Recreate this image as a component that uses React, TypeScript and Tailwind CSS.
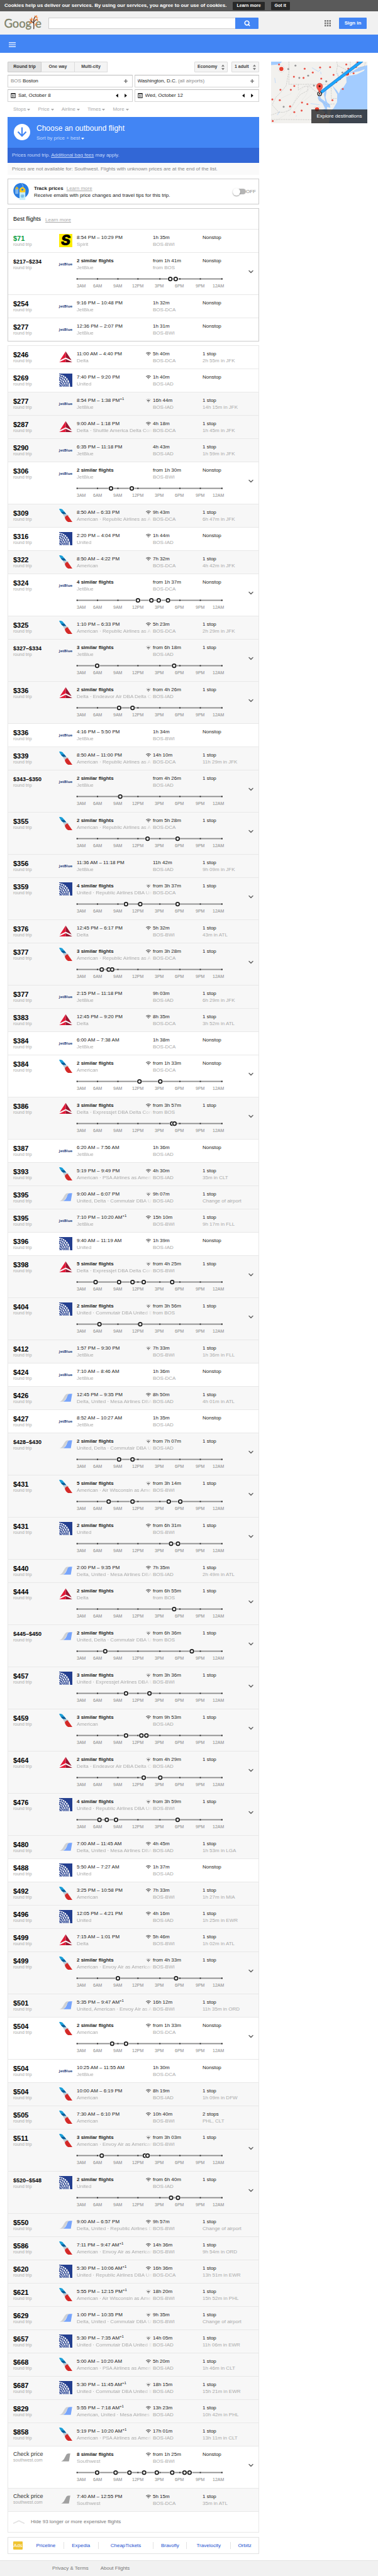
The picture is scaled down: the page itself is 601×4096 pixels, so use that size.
import React from "react";
import { ChevronDown, Search } from "lucide-react";

type Airline = "spirit" | "jetblue" | "delta" | "united" | "american" | "mixed" | "southwest";
type Wifi = "none" | "full" | "some";

interface Flight {
  price: string;
  airline: Airline;
  title: string;
  nextDay?: boolean;
  carrier: string;
  wifi: Wifi;
  duration: string;
  route: string;
  stops: string;
  layover?: string;
  departures?: number[];
}

const WIFI: Wifi[] = ["none", "full", "some"];
const J = "JetBlue";
const AA = "American";
const UA = "United";
const DL = "Delta";
const AA_REPUBLIC = "American · Republic Airlines as A";
const AA_ENVOY = "American · Envoy Air as American";
const AA_PSA = "American · PSA Airlines as Ameri";
const AA_WISCONSIN = "American · Air Wisconsin as Ame";
const DL_ENDEAVOR = "Delta · Endeavor Air DBA Delta Co";
const DL_EXPRESSJET = "Delta · Expressjet DBA Delta Con";
const UA_REPUBLIC = "United · Republic Airlines DBA Un";
const UA_COMMUTAIR = "United · Commutair DBA United E";
const UD_COMMUTAIR = "United, Delta · Commutair DBA U";
const DU_MESA = "Delta, United · Mesa Airlines DBA";

function one(
  price: string,
  airline: Airline,
  time: string,
  carrier: string,
  wifi: number,
  duration: string,
  route: string,
  layover?: string,
  stops?: string,
): Flight {
  return {
    price,
    airline,
    title: time.replace("+1", ""),
    nextDay: time.endsWith("+1"),
    carrier,
    wifi: WIFI[wifi],
    duration,
    route,
    stops: stops ?? (layover ? "1 stop" : "Nonstop"),
    layover,
  };
}

function group(
  price: string,
  airline: Airline,
  count: number,
  carrier: string,
  wifi: number,
  duration: string,
  route: string,
  stops: string,
  departures: number[],
): Flight {
  return {
    price,
    airline,
    title: `${count} similar flights`,
    carrier,
    wifi: WIFI[wifi],
    duration: `from ${duration}`,
    route,
    stops,
    departures,
  };
}

const BEST: Flight[] = [
  one("$71", "spirit", "8:54 PM – 10:29 PM", "Spirit", 0, "1h 35m", "BOS-BWI"),
  group("$217–$234", "jetblue", 2, J, 0, "1h 41m", "from BOS", "Nonstop", [243, 257]),
  one("$254", "jetblue", "9:16 PM – 10:48 PM", J, 0, "1h 32m", "BOS-DCA"),
  one("$277", "jetblue", "12:36 PM – 2:07 PM", J, 0, "1h 31m", "BOS-BWI"),
];

const REST: Flight[] = [
  one("$246", "delta", "11:00 AM – 4:40 PM", DL, 1, "5h 40m", "BOS-DCA", "2h 55m in JFK"),
  one("$269", "united", "7:40 PM – 9:20 PM", UA, 1, "1h 40m", "BOS-IAD"),
  one("$277", "jetblue", "8:54 PM – 1:38 PM+1", J, 2, "16h 44m", "BOS-IAD", "14h 15m in JFK"),
  one("$287", "delta", "9:00 AM – 1:18 PM", "Delta · Shuttle America Delta Con", 1, "4h 18m", "BOS-DCA", "1h 45m in JFK"),
  one("$290", "jetblue", "6:35 PM – 11:18 PM", J, 0, "4h 43m", "BOS-IAD", "1h 59m in JFK"),
  group("$306", "jetblue", 2, J, 0, "1h 30m", "BOS-BWI", "Nonstop", [89, 143]),
  one("$309", "american", "8:50 AM – 6:33 PM", AA_REPUBLIC, 1, "9h 43m", "BOS-DCA", "6h 47m in JFK"),
  one("$316", "united", "2:20 PM – 4:04 PM", UA, 1, "1h 44m", "BOS-IAD"),
  one("$322", "american", "8:50 AM – 4:22 PM", AA, 1, "7h 32m", "BOS-DCA", "4h 42m in JFK"),
  group("$324", "jetblue", 4, J, 0, "1h 37m", "BOS-DCA", "Nonstop", [159, 194, 213, 237]),
  one("$325", "american", "1:10 PM – 6:33 PM", AA_REPUBLIC, 1, "5h 23m", "BOS-DCA", "2h 29m in JFK"),
  group("$327–$334", "jetblue", 3, J, 2, "6h 18m", "BOS-IAD", "1 stop", [53, 253]),
  group("$336", "delta", 2, DL_ENDEAVOR, 2, "4h 26m", "BOS-IAD", "1 stop", [110, 145]),
  one("$336", "jetblue", "4:16 PM – 5:50 PM", J, 0, "1h 34m", "BOS-BWI"),
  one("$339", "american", "8:50 AM – 11:00 PM", AA_REPUBLIC, 1, "14h 10m", "BOS-DCA", "11h 29m in JFK"),
  group("$343–$350", "jetblue", 2, J, 0, "4h 26m", "BOS-IAD", "1 stop", [113]),
  group("$355", "american", 2, AA_REPUBLIC, 1, "5h 28m", "BOS-DCA", "1 stop", [184, 262]),
  one("$356", "jetblue", "11:36 AM – 11:18 PM", J, 0, "11h 42m", "BOS-IAD", "9h 09m in JFK"),
  group("$359", "united", 4, UA_REPUBLIC, 2, "3h 37m", "BOS-DCA", "1 stop", [128, 165, 262]),
  one("$376", "delta", "12:45 PM – 6:17 PM", DL, 1, "5h 32m", "BOS-BWI", "43m in ATL"),
  group("$377", "american", 3, AA_REPUBLIC, 1, "3h 28m", "BOS-DCA", "1 stop", [65, 83, 92]),
  one("$377", "jetblue", "2:15 PM – 11:18 PM", J, 0, "9h 03m", "BOS-IAD", "6h 29m in JFK"),
  one("$383", "delta", "12:45 PM – 9:20 PM", DL, 1, "8h 35m", "BOS-DCA", "3h 52m in ATL"),
  one("$384", "jetblue", "6:00 AM – 7:38 AM", J, 0, "1h 38m", "BOS-DCA"),
  group("$384", "american", 2, AA, 1, "1h 33m", "BOS-DCA", "Nonstop", [163, 217]),
  group("$386", "delta", 3, DL_EXPRESSJET, 1, "3h 57m", "from BOS", "1 stop", [248, 254]),
  one("$387", "jetblue", "6:20 AM – 7:56 AM", J, 0, "1h 36m", "BOS-IAD"),
  one("$393", "american", "5:19 PM – 9:49 PM", AA_PSA, 1, "4h 30m", "BOS-IAD", "35m in CLT"),
  one("$395", "mixed", "9:00 AM – 6:07 PM", UD_COMMUTAIR, 2, "9h 07m", "BOS-IAD", "Change of airport"),
  one("$395", "jetblue", "7:10 PM – 10:20 AM+1", J, 1, "15h 10m", "BOS-BWI", "9h 17m in FLL"),
  one("$396", "united", "9:40 AM – 11:19 AM", UA, 1, "1h 39m", "BOS-IAD"),
  group("$398", "delta", 5, DL_EXPRESSJET, 2, "4h 25m", "BOS-BWI", "1 stop", [49, 110, 145, 174, 248]),
  group("$404", "united", 2, UA_COMMUTAIR, 2, "3h 56m", "from BOS", "1 stop", [59, 165]),
  one("$412", "jetblue", "1:57 PM – 9:30 PM", J, 2, "7h 33m", "BOS-BWI", "1h 36m in FLL"),
  one("$424", "jetblue", "7:10 AM – 8:46 AM", J, 0, "1h 36m", "BOS-DCA"),
  one("$426", "mixed", "12:45 PM – 9:35 PM", DU_MESA, 1, "8h 50m", "BOS-IAD", "4h 01m in ATL"),
  one("$427", "jetblue", "8:52 AM – 10:27 AM", J, 0, "1h 35m", "BOS-IAD"),
  group("$428–$430", "mixed", 2, UD_COMMUTAIR, 2, "7h 07m", "BOS-IAD", "1 stop", [110, 145]),
  group("$431", "american", 5, AA_WISCONSIN, 2, "3h 14m", "BOS-BWI", "1 stop", [83, 145, 239, 269]),
  group("$431", "united", 2, UA, 1, "6h 31m", "BOS-BWI", "1 stop", [245, 263]),
  one("$440", "mixed", "2:00 PM – 9:35 PM", DU_MESA, 1, "7h 35m", "BOS-IAD", "2h 49m in ATL"),
  group("$444", "delta", 2, DL, 1, "6h 55m", "from BOS", "1 stop", [253]),
  group("$445–$450", "mixed", 2, UD_COMMUTAIR, 2, "6h 36m", "from BOS", "1 stop", [74, 299]),
  group("$457", "united", 3, "United · Expressjet Airlines DBA U", 2, "3h 36m", "BOS-BWI", "1 stop", [128, 189]),
  group("$459", "american", 3, AA, 1, "9h 53m", "BOS-IAD", "1 stop", [128, 168, 181]),
  group("$464", "delta", 2, DL_ENDEAVOR, 2, "4h 29m", "BOS-IAD", "1 stop", [174, 217]),
  group("$476", "united", 4, UA_REPUBLIC, 2, "3h 59m", "BOS-BWI", "1 stop", [59, 78, 102, 262]),
  one("$480", "mixed", "7:00 AM – 11:45 AM", DU_MESA, 1, "4h 45m", "BOS-IAD", "1h 53m in LGA"),
  one("$488", "united", "5:50 AM – 7:27 AM", UA, 1, "1h 37m", "BOS-IAD"),
  one("$492", "american", "3:25 PM – 10:58 PM", AA, 1, "7h 33m", "BOS-BWI", "1h 27m in MIA"),
  one("$496", "united", "12:05 PM – 4:21 PM", UA, 1, "4h 16m", "BOS-IAD", "1h 25m in EWR"),
  one("$499", "delta", "7:15 AM – 1:01 PM", DL, 1, "5h 46m", "BOS-BWI", "1h 02m in ATL"),
  group("$499", "american", 2, AA_ENVOY, 2, "4h 33m", "BOS-BWI", "1 stop", [107, 258]),
  one("$501", "mixed", "5:35 PM – 9:47 AM+1", "United, American · Envoy Air as A", 1, "16h 12m", "BOS-BWI", "11h 35m in ORD"),
  group("$504", "american", 2, AA, 1, "1h 33m", "BOS-DCA", "Nonstop", [92, 128]),
  one("$504", "jetblue", "10:25 AM – 11:55 AM", J, 0, "1h 30m", "BOS-DCA"),
  one("$504", "american", "10:00 AM – 6:19 PM", AA, 1, "8h 19m", "BOS-IAD", "1h 09m in DFW"),
  one("$505", "american", "7:30 AM – 6:10 PM", AA, 1, "10h 40m", "BOS-BWI", "PHL, CLT", "2 stops"),
  group("$511", "american", 3, AA_ENVOY, 2, "3h 03m", "BOS-BWI", "1 stop", [65, 177, 184]),
  group("$520–$548", "united", 2, UA, 1, "6h 40m", "BOS-IAD", "1 stop", [245, 263]),
  one("$550", "mixed", "9:00 AM – 6:57 PM", "Delta, United · Republic Airlines D", 1, "9h 57m", "BOS-BWI", "Change of airport"),
  one("$586", "american", "7:11 PM – 9:47 AM+1", AA_ENVOY, 1, "14h 36m", "BOS-BWI", "9h 54m in ORD"),
  one("$620", "united", "5:30 PM – 10:06 AM+1", UA_REPUBLIC, 1, "16h 36m", "BOS-DCA", "13h 51m in EWR"),
  one("$621", "american", "5:55 PM – 12:15 PM+1", AA_WISCONSIN, 2, "18h 20m", "BOS-BWI", "15h 52m in PHL"),
  one("$629", "mixed", "1:00 PM – 10:35 PM", "Delta, United · Commutair DBA U", 2, "9h 35m", "BOS-BWI", "Change of airport"),
  one("$657", "united", "5:30 PM – 7:35 AM+1", UA_COMMUTAIR, 2, "14h 05m", "BOS-IAD", "11h 06m in EWR"),
  one("$668", "american", "5:00 AM – 10:20 AM", AA_PSA, 1, "5h 20m", "BOS-IAD", "1h 46m in CLT"),
  one("$687", "united", "5:30 PM – 11:45 AM+1", UA_COMMUTAIR, 2, "18h 15m", "BOS-IAD", "15h 21m in EWR"),
  one("$829", "mixed", "5:55 PM – 7:18 AM+1", "American, United · Mesa Airlines", 1, "13h 23m", "BOS-IAD", "10h 42m in PHL"),
  one("$858", "american", "5:19 PM – 10:20 AM+1", AA_PSA, 1, "17h 01m", "BOS-IAD", "13h 11m in CLT"),
  group("Check price", "southwest", 8, "Southwest", 1, "1h 25m", "BOS-BWI", "Nonstop", [53, 101, 137, 175, 208, 248, 280, 293]),
  one("Check price", "southwest", "7:40 AM – 12:55 PM", "Southwest", 1, "5h 15m", "BOS-DCA", "35m in ATL"),
];

function AirlineLogo({ airline }: { airline: Airline }) {
  const box = "block size-[21px]";
  switch (airline) {
    case "jetblue":
      return (
        <span className="flex h-[21px] w-[21px] items-center justify-center font-['Open_Sans',sans-serif] text-[6px] font-bold leading-[8px] text-[#24407c]">
          jetBlue
        </span>
      );
    case "spirit":
      return (
        <span className="flex size-[21px] items-center justify-center bg-[#ffec00] font-['Inter',sans-serif] text-[23px] font-black italic leading-none text-black">
          S
        </span>
      );
    case "delta":
      return (
        <svg viewBox="0 0 35 35" className={box} aria-hidden="true">
          <path d="M17.5 3 L2 26.5 L17.5 19 Z" fill="#e51937" />
          <path d="M17.5 3 L33 26.5 L17.5 19 Z" fill="#98152f" />
          <path d="M17.5 23 L0 31.5 H17.5 Z" fill="#e51937" />
          <path d="M17.5 23 L35 31.5 H17.5 Z" fill="#98152f" />
        </svg>
      );
    case "united":
      return (
        <svg viewBox="0 0 35 35" className={box} aria-hidden="true">
          <rect width="35" height="35" fill="#243f8f" />
          <path d="M0 2 C14 2 29 14 29 35 H0 Z" fill="#fff" />
          <g fill="none" stroke="#243f8f" strokeWidth="1.7">
            <path d="M0 6 C12 7 24 18 25 35" />
            <path d="M0 11 C9 13 19 22 20.5 35" />
            <path d="M0 17 C7 19 14 26 15.5 35" />
            <path d="M0 23 C5 25 10 30 11 35" />
            <path d="M0 29 C3 30 5 33 6 35" />
            <path d="M6 1 C2 10 1 16 0 20" />
            <path d="M11 3 C6 12 3 22 2 35" />
            <path d="M16 5 C11 13 7 24 6 35" />
            <path d="M21 9 C16 15 12 25 11 35" />
            <path d="M25 14 C20 19 17 27 16 35" />
            <path d="M28 21 C24 25 22 30 21 35" />
          </g>
        </svg>
      );
    case "american":
      return (
        <svg viewBox="0 0 35 35" className={box} aria-hidden="true">
          <path d="M0 0 C6 0 9 1 11 4 L19 14 H11 C7 13 3 7 0 0 Z" fill="#1b9fd8" />
          <path d="M5 8 L14 8 L19 14 H11 C9 13 7 11 5 8 Z" fill="#0c5d98" />
          <path d="M10 15 L19 14 C22 15 24 17 27 17.5 C21 18 17 20 15 23 C13 20 12 18 10 15 Z" fill="#c3ccd3" />
          <path d="M15 23 C18 18 21 17 23 18 L35 35 H24 C19 33 16 28 15 23 Z" fill="#d42a28" />
        </svg>
      );
    case "mixed":
      return (
        <svg viewBox="0 0 35 35" className={box} aria-hidden="true">
          <path d="M1 28 C8 26 11 19 15 12 Q18 7 22 7 H27 Q24 8 22 12 C18 19 16 26 9 28 Z" fill="#cfd1d4" />
          <path d="M10 28 C17 26 20 18 22 12 Q24 7 28 7 H35 Q34 8 34 10 L31 28 Z" fill="#77a4fb" />
        </svg>
      );
    case "southwest":
      return (
        <svg viewBox="0 0 35 35" className={box} aria-hidden="true">
          <path d="M5 28 C12 26 15 18 18 12 Q20 7 24 7 H30 Q29 8 29 10 L26 28 Z" fill="#a0a0a0" />
        </svg>
      );
  }
}

function WifiMark({ level }: { level: Wifi }) {
  if (level === "none") return null;
  return (
    <svg viewBox="0 0 13 11" className="h-[7px] w-[8px] shrink-0" fill="none" strokeLinecap="round" role="img" aria-label="Wi-Fi">
      <path d="M1 4 Q6.5 -0.5 12 4" stroke={level === "full" ? "#444" : "#c4c4c4"} strokeWidth="1.7" />
      <path d="M3.5 6.6 Q6.5 4 9.5 6.6" stroke="#444" strokeWidth="1.7" />
      <circle cx="6.5" cy="9" r="1.2" fill="#444" />
    </svg>
  );
}

const TICKS = [1, 54, 107, 159, 216, 268, 321, 377];

function Timeline({ departures, shaded }: { departures: number[]; shaded: boolean }) {
  const halo = shaded ? "#f7f7f7" : "#fff";
  return (
    <div className="w-[232px]">
      <svg viewBox="0 0 379 14" className="mt-[8px] block h-[9px] w-full overflow-visible" aria-hidden="true">
        <rect x="0" y="5.5" width="379" height="3" fill="#8c8c8c" />
        {TICKS.map((x) => (
          <rect key={x} x={x - 1.5} y="5.5" width="3" height="3" fill="#222" />
        ))}
        {departures.map((x) => (
          <g key={x}>
            <circle cx={x} cy="7.2" r="7" fill={halo} />
            <circle cx={x} cy="7.2" r="4.5" fill="#fff" stroke="#222" strokeWidth="3" />
          </g>
        ))}
      </svg>
      <div className="mt-[3px] grid grid-cols-[26px_32px_30px_36px_32px_33px_27px_auto] text-[7px] leading-[8px] text-[#888]">
        {["3AM", "6AM", "9AM", "12PM", "3PM", "6PM", "9PM", "12AM"].map((t) => (
          <span key={t}>{t}</span>
        ))}
      </div>
    </div>
  );
}

function FlightRow({ flight, shaded, cheapest }: { flight: Flight; shaded: boolean; cheapest: boolean }) {
  const unknown = flight.price === "Check price";
  const isRange = flight.price.includes("–");
  const isGroup = !!flight.departures;
  return (
    <li
      className={`flex items-start border-t border-[#e8e8e8] pl-[8px] ${shaded ? "bg-[#f7f7f7]" : "bg-white"} ${isGroup ? "h-[67px]" : "h-[37px]"}`}
    >
      <div className="w-[73px] shrink-0 pt-[8px]">
        {unknown ? (
          <a href="#southwest" className="-mt-[2px] block text-[9px] leading-[12px] text-[#333]">
            {flight.price}
          </a>
        ) : (
          <div
            className={`font-bold leading-[12px] ${isRange ? "text-[9px]" : "text-[11px]"} ${cheapest ? "text-[#0a9d41]" : "text-black"}`}
          >
            {flight.price}
          </div>
        )}
        <div className="text-[7px] leading-[8px] text-[#aaa]">{unknown ? "southwest.com" : "round trip"}</div>
      </div>
      <div className="w-[28px] shrink-0 pt-[7px]">
        <AirlineLogo airline={flight.airline} />
      </div>
      <div className="min-w-0 flex-1 pt-[7px]">
        <div className="grid grid-cols-[121px_79px_1fr] whitespace-nowrap text-[8px] leading-[11px]">
          <div className="min-w-0">
            <div className="flex items-center justify-between pr-[3px] text-[#222]">
              <span className={isGroup ? "font-bold" : ""}>
                {flight.title}
                {flight.nextDay && <sup className="text-[6px]">+1</sup>}
              </span>
              <WifiMark level={flight.wifi} />
            </div>
            <div className="overflow-hidden text-[#aaa] [mask-image:linear-gradient(to_right,#000_88%,transparent)]">
              {flight.carrier}
            </div>
          </div>
          <div>
            <div className="text-[#222]">{flight.duration}</div>
            <div className="text-[#aaa]">{flight.route}</div>
          </div>
          <div>
            <div className="text-[#222]">{flight.stops}</div>
            <div className="text-[#aaa]">{flight.layover}</div>
          </div>
        </div>
        {flight.departures && <Timeline departures={flight.departures} shaded={shaded} />}
      </div>
      <div className="w-[18px] shrink-0">
        {isGroup && (
          <button type="button" aria-label="Show similar flights" className="mt-[24px] block">
            <ChevronDown className="size-[12px] text-[#666]" strokeWidth={3} />
          </button>
        )}
      </div>
    </li>
  );
}

function GoogleDoodle() {
  return (
    <svg viewBox="0 0 96 40" className="block h-[25px] w-[59px]" role="img" aria-label="Google">
      <g fill="#7e8268" stroke="#7e8268" strokeWidth="0.5" fontFamily="Lato, sans-serif" fontSize="30">
        <text x="-1" y="32">Goog</text>
        <text x="80" y="32">e</text>
      </g>
      <g fill="none" stroke="#4a2a20" strokeWidth="2" strokeLinecap="round">
        <path d="M76 35 C77 26 75 18 76 10 L80 3" />
        <path d="M76 21 L68 13" />
        <path d="M76 17 L84 10" />
      </g>
      <g fill="#f08a45">
        <path d="M80 5 L77 0 L81 2 L84 -1 L84 4 L88 5 L83 7 Z" />
        <path d="M69 14 L64 10 L69 10 L70 5 L73 10 L72 15 Z" />
        <path d="M67 20 L63 17 L68 16 L72 18 L70 22 Z" />
        <path d="M82 11 L86 7 L86 11 L88 14 L84 15 Z" />
        <path d="M78 13 L75 9 L80 9 Z" />
        <path d="M79 23 L84 20 L83 25 L79 28 Z" />
      </g>
    </svg>
  );
}

function DestinationMap() {
  const red: [number, number][] = [
    [74, 35], [274, 68], [337, 98], [394, 59], [472, 56], [598, 35], [614, 68], [655, 104], [499, 116], [403, 146],
    [190, 131], [265, 140], [193, 203], [166, 233], [85, 233], [22, 308], [80, 314], [160, 362], [253, 332],
    [295, 344], [250, 395], [193, 407], [25, 476], [571, 227], [490, 314], [520, 173], [430, 425], [674, 55],
  ];
  const gray: [number, number][] = [
    [202, 44], [146, 71], [232, 140], [301, 122], [442, 167], [346, 200], [568, 98], [550, 149], [110, 365],
  ];
  const cities: [number, number][] = [[92, 70], [604, 106], [370, 385], [694, 14]];
  return (
    <svg viewBox="12 12 750 483" preserveAspectRatio="xMidYMid slice" className="block size-full" aria-hidden="true">
      <rect x="12" y="12" width="750" height="483" fill="#f2f1ee" />
      <path
        d="M762 42 L700 58 L620 104 L598 134 L600 175 L578 210 L555 225 L540 262 L524 238 L490 200 L500 220 L528 268 L526 330 L500 375 L476 400 L462 495 L762 495 Z"
        fill="#a3ccff"
      />
      <path d="M12 12 H100 L84 26 L60 36 L12 40 Z" fill="#a3ccff" />
      <path d="M598 132 L640 100 L700 88 L742 72 L735 86 L680 112 L620 124 Z" fill="#f2f1ee" />
      <path d="M436 205 L444 250 L436 290 L448 330 L470 348 L474 372 L448 366 L452 420 L440 440 L428 400 L402 392 L434 380 L412 336 L384 316 L376 290 L390 270 L400 300 L436 326 L424 270 Z" fill="#a3ccff" />
      <g fill="none" stroke="#a3ccff" strokeWidth="3">
        <path d="M330 60 L380 90 L402 70 M398 92 L402 112 M530 100 L540 160 M505 155 L500 185" />
        <path d="M40 140 L46 180 M60 430 L80 400 M205 440 L212 434 M320 340 L390 350 M350 380 L420 420" />
      </g>
      <g fill="none" stroke="#dcdcda" strokeWidth="2">
        <path d="M300 180 L240 240 L190 330 L120 430 L40 480 M320 200 L280 280 L200 380 L150 440 M90 300 L170 260 M270 320 L330 270" />
      </g>
      <g fill="none" stroke="#b3b3b1" strokeWidth="2.5" strokeDasharray="14 5">
        <path d="M151 12 V190 H476 L490 205 M480 196 L482 300 H524" />
        <path d="M224 190 V235 L262 210 L312 202 L345 235 L385 262 M300 205 L296 240 L240 270 L200 320 L160 390 L110 408 L72 408 L20 350 L50 290 L90 250 L130 200 L146 110" />
        <path d="M12 464 L120 464 L330 466 M72 408 L12 430 M376 300 L440 348 L510 342" />
        <path d="M524 12 L530 44 L596 76 L592 130 M530 44 L520 100 L540 130 L500 180 M630 12 V70 L740 52 L748 12" />
      </g>
      {gray.map(([x, y]) => (
        <circle key={`${x}-${y}`} cx={x} cy={y} r="7.5" fill="#979797" />
      ))}
      {red.map(([x, y]) => (
        <circle key={`${x}-${y}`} cx={x} cy={y} r="7.5" fill="#ea5348" />
      ))}
      {cities.map(([x, y]) => (
        <g key={`${x}-${y}`}>
          <circle cx={x} cy={y} r="25" fill="#bdbdbd" />
          <circle cx={x} cy={y} r="20" fill="#e6402f" stroke="#fff" strokeWidth="7" />
        </g>
      ))}
      <path d="M398 256 L722 6" stroke="#2b76c4" strokeWidth="24" />
      <path d="M398 256 L722 6" stroke="#1ea7fd" strokeWidth="18" />
      <circle cx="390" cy="264" r="15" fill="#fff" stroke="#222" strokeWidth="6" />
      <circle cx="390" cy="264" r="6" fill="#222" />
      <path d="M390 262 C388 238 366 228 366 205 A24 24 0 0 1 414 205 C414 228 392 238 390 262 Z" fill="#f5564a" stroke="#b8382e" strokeWidth="2" />
      <circle cx="390" cy="205" r="8" fill="#3c0c09" />
    </svg>
  );
}

function Triangle({ className, dir }: { className: string; dir: "left" | "right" | "down" }) {
  const d = { left: "M8 0 V10 L2 5 Z", right: "M2 0 V10 L8 5 Z", down: "M0 2 H10 L5 8 Z" }[dir];
  return (
    <svg viewBox="0 0 10 10" className={className} fill="currentColor" aria-hidden="true">
      <path d={d} />
    </svg>
  );
}

function Spinner() {
  return (
    <svg viewBox="0 0 8 14" className="pointer-events-none -ml-[9px] h-[10px] w-[5px] shrink-0" fill="#777" aria-hidden="true">
      <path d="M4 0 L8 5 H0 Z M0 9 H8 L4 14 Z" />
    </svg>
  );
}

function CalendarMark() {
  return (
    <svg viewBox="0 0 12 13" className="h-[8px] w-[8px] shrink-0" aria-hidden="true">
      <path d="M0 0 H12 V13 H0 Z M1.5 3 V11.5 H10.5 V3 Z" fill="#222" fillRule="evenodd" />
      <path d="M3 5.5 H5.5 V10 M3.5 7.5 H5.5 M3 10 H5.5 M8 5 V10.5" stroke="#222" fill="none" />
    </svg>
  );
}

const FIELD = "flex h-[20px] min-w-0 flex-1 items-center border border-t-[#bbb] border-[#d4d4d4] bg-white px-[4px]";

function DateField({ id, label, value }: { id: string; label: string; value: string }) {
  return (
    <div className={FIELD}>
      <label htmlFor={id} className="flex" aria-label={label}>
        <CalendarMark />
      </label>
      <input id={id} defaultValue={value} className="ml-[4px] min-w-0 flex-1 text-[8px] text-[#222] outline-none" />
      <button type="button" aria-label="Previous day" className="mr-[8px] text-black">
        <Triangle dir="left" className="size-[6px]" />
      </button>
      <button type="button" aria-label="Next day" className="mr-[3px] text-black">
        <Triangle dir="right" className="size-[6px]" />
      </button>
    </div>
  );
}

function PlusButton() {
  return (
    <button type="button" aria-label="Add airport" className="ml-auto mr-[3px]">
      <svg viewBox="0 0 9 9" className="size-[6px]" stroke="#555" strokeWidth="1.8" aria-hidden="true">
        <path d="M4.5 0 V9 M0 4.5 H9" />
      </svg>
    </button>
  );
}

export default function App() {
  return (
    <div className="min-h-screen bg-white font-['Liberation_Sans',Arial,sans-serif] text-[8px] text-[#222]">
      <div className="flex h-[18px] items-center bg-[#5a5a5a] pl-[7px] font-bold text-white">
        <span className="whitespace-nowrap">
          Cookies help us deliver our services. By using our services, you agree to our use of cookies.
        </span>
        <a href="#cookies" className="ml-[10px] flex h-[13px] items-center rounded-[1px] bg-[#282828] px-[6px] text-[7px]">
          Learn more
        </a>
        <button type="button" className="ml-[10px] h-[13px] rounded-[1px] bg-[#282828] px-[6px] text-[7px] font-bold">
          Got it
        </button>
      </div>

      <header className="flex h-[37px] items-center bg-[#f1f1f1] pl-[7px] pr-[18px]">
        <a href="#home">
          <GoogleDoodle />
        </a>
        <form className="ml-[11px] flex h-[18px] w-[334px]">
          <input aria-label="Search" className="h-full min-w-0 flex-1 border border-r-0 border-[#d0d0d0] bg-white px-1 outline-none" />
          <button type="button" aria-label="Search" className="flex w-[37px] items-center justify-center rounded-r-[1px] bg-[#4285f4]">
            <Search className="size-[10px] text-white" strokeWidth={4} />
          </button>
        </form>
        <button type="button" aria-label="Apps" className="ml-auto">
          <svg viewBox="0 0 16 16" className="size-[10px]" fill="#757575" aria-hidden="true">
            {[0, 6, 12].map((y) => [0, 6, 12].map((x) => <rect key={`${x}-${y}`} x={x} y={y} width="4" height="4" />))}
          </svg>
        </button>
        <a href="#signin" className="ml-[13px] flex h-[18px] w-[44px] items-center justify-center rounded-[1px] bg-[#4285f4] font-bold text-white">
          Sign in
        </a>
      </header>

      <div className="flex h-[29px] items-center bg-[#4285f4] pl-[14px]">
        <button type="button" aria-label="Menu" className="mt-[2px]">
          <svg viewBox="0 0 18 12" className="h-[8px] w-[11px]" fill="#fff" aria-hidden="true">
            <path d="M0 0 H18 V2 H0 Z M0 5 H18 V7 H0 Z M0 10 H18 V12 H0 Z" />
          </svg>
        </button>
      </div>

      <div className="flex items-start gap-[19px] pl-[12px] pr-[17px] pt-[14px]">
        <main className="min-w-0 flex-1">
          <div className="flex h-[17px] items-stretch text-[7px] font-bold text-[#444]">
            <button type="button" className="w-[54px] rounded-l-[1px] border border-[#ccc] bg-[#e2e2e2] text-[#333]">Round trip</button>
            <button type="button" className="w-[53px] border-y border-r border-[#dcdcdc] bg-[#f4f4f4]">One way</button>
            <button type="button" className="w-[52px] rounded-r-[1px] border-y border-r border-[#dcdcdc] bg-[#f4f4f4]">Multi-city</button>
            <label className="ml-auto flex w-[53px] items-center rounded-[1px] border border-[#dcdcdc] bg-[#f4f4f4]">
              <select aria-label="Cabin" className="h-full w-full appearance-none pl-[4px] outline-none">
                <option>Economy</option>
              </select>
              <Spinner />
            </label>
            <label className="ml-[6px] flex w-[44px] items-center rounded-[1px] border border-[#dcdcdc] bg-[#f4f4f4]">
              <select aria-label="Passengers" className="h-full w-full appearance-none pl-[4px] outline-none">
                <option>1 adult</option>
              </select>
              <Spinner />
            </label>
          </div>

          <div className="mt-[4px] flex gap-[3px]">
            <div className={FIELD}>
              <label htmlFor="from" className="text-[#888]">BOS</label>
              <input id="from" defaultValue="Boston" className="ml-[2px] min-w-0 field-sizing-content outline-none" />
              <PlusButton />
            </div>
            <div className={FIELD}>
              <input id="to" defaultValue="Washington, D.C." className="min-w-0 field-sizing-content outline-none" />
              <label htmlFor="to" className="ml-[2px] text-[#888]">(all airports)</label>
              <PlusButton />
            </div>
          </div>
          <div className="mt-[3px] flex gap-[3px]">
            <DateField id="depart" label="Departure date" value="Sat, October 8" />
            <DateField id="return" label="Return date" value="Wed, October 12" />
          </div>

          <div className="flex h-[24px] items-center gap-[12px] pl-[9px] text-[#aaa]">
            {["Stops", "Price", "Airline", "Times", "More"].map((name) => (
              <button key={name} type="button" className="flex items-center gap-[2px]">
                {name}
                <Triangle dir="down" className="size-[5px]" />
              </button>
            ))}
          </div>

          <section className="flex h-[49px] bg-[#4285f4] pl-[10px] pt-[11px] text-white">
            <svg viewBox="0 0 42 42" className="size-[26px] shrink-0" aria-hidden="true">
              <circle cx="21" cy="21" r="21" fill="#fff" />
              <path d="M21 9 V31 M10.5 20 L21 31 L31.5 20" fill="none" stroke="#4285f4" strokeWidth="3.5" />
            </svg>
            <div className="pl-[10px]">
              <h1 className="text-[12px] leading-[14px]">Choose an outbound flight</h1>
              <button type="button" className="mt-[4px] flex items-center gap-[2px] leading-[10px] text-[#c6dafc]">
                Sort by price + best
                <Triangle dir="down" className="size-[5px] text-white" />
              </button>
            </div>
          </section>
          <p className="flex h-[24px] items-center bg-[#3267d6] pl-[7px] text-[#c6dafc]">
            <span>
              Prices round trip.{" "}
              <a href="#bags" className="underline">
                Additional bag fees
              </a>{" "}
              may apply.
            </span>
          </p>
          <p className="flex h-[19px] items-center bg-[#fafafa] pl-[7px] text-[#888]">
            Prices are not available for: Southwest. Flights with unknown prices are at the end of the list.
          </p>

          <section className="mt-[6px] flex h-[41px] items-center border border-[#ccc] pl-[8px] pr-[4px]">
            <svg viewBox="0 0 40 44" className="h-[27px] w-[25px] shrink-0" aria-hidden="true">
              <circle cx="20" cy="20" r="20" fill="#2a7de1" />
              <path d="M20 0 C26 5 26 12 23 18" fill="none" stroke="#9fc8f5" strokeWidth="1.5" />
              <path d="M5 14 L9 9 L13 14 V28 H5 Z" fill="#7fb6ee" />
              <path d="M5 14 L9 9 L13 14 V16 H5 Z" fill="#d5b62f" />
              <path d="M16 16 L21 11 H26 L31 16 V44 H16 Z" fill="#c9effa" />
              <path d="M16 16 L21 11 H26 L31 16 V24 H16 Z" fill="#fbc91b" />
              <circle cx="23.5" cy="17" r="2.5" fill="#2a7de1" />
              <circle cx="23.5" cy="34" r="5" fill="#8fd0ee" />
              <path d="M20.5 35 L23 33 L24.5 35 L27 32" fill="none" stroke="#2a7de1" />
            </svg>
            <div className="ml-[8px] leading-[11px]">
              <div>
                <strong id="track">Track prices</strong>
                <a href="#track-help" className="ml-[5px] text-[#aaa] underline">Learn more</a>
              </div>
              <div>Receive emails with price changes and travel tips for this trip.</div>
            </div>
            <label className="ml-auto flex items-center">
              <input type="checkbox" aria-labelledby="track" className="peer sr-only" />
              <span className="flex h-[9px] w-[21px] items-center rounded-full bg-[linear-gradient(to_right,transparent_30%,#b5b5b5_30%)]">
                <span className="size-[12px] shrink-0 rounded-full bg-white shadow-[0_1px_2px_rgba(0,0,0,0.4)]" />
              </span>
              <span className="text-[#888]">OFF</span>
            </label>
          </section>

          <section className="mt-[6px] border border-[#ccc]">
            <div className="flex h-[32px] items-center gap-[7px] pl-[8px]">
              <h2 className="text-[9px] leading-[12px] text-black">Best flights</h2>
              <a href="#best-help" className="pt-[3px] leading-[10px] text-[#aaa] underline">Learn more</a>
            </div>
            <ul>
              {BEST.map((f, i) => (
                <FlightRow key={i} flight={f} shaded={false} cheapest={i === 0} />
              ))}
            </ul>
          </section>

          <section className="mt-[6px] border-x border-b border-[#e8e8e8]">
            <ul>
              {REST.map((f, i) => (
                <FlightRow key={i} flight={f} shaded={i > 0 && f.stops !== "Nonstop"} cheapest={false} />
              ))}
            </ul>
            <button type="button" className="flex h-[33px] w-full items-center border-t border-[#e8e8e8] pl-[8px] text-[#777]">
              <svg viewBox="0 0 30 10" className="mr-[10px] h-[6px] w-[18px]" fill="none" stroke="#e2e2e2" strokeWidth="3" aria-hidden="true">
                <path d="M0 9 L15 2 L30 9" />
              </svg>
              Hide 93 longer or more expensive flights
            </button>
          </section>

          <section className="mt-[7px] grid h-[27px] grid-cols-[32fr_57fr_55fr_88fr_53fr_70fr_44fr] items-center border border-[#e2e2e2] text-center text-[#1a4fd0]">
            <span className="ml-[8px] flex h-[13px] w-[15px] items-center justify-center rounded-[1px] bg-[#f0c433] text-white">Ads</span>
            {["Priceline", "Expedia", "CheapTickets", "Bravofly", "Travelocity", "Orbitz"].map((name) => (
              <a key={name} href={`#${name}`} className="border-r border-[#e2e2e2] leading-[11px] last:border-r-0">
                {name}
              </a>
            ))}
          </section>
        </main>

        <aside className="relative h-[98px] w-[153px] shrink-0 overflow-hidden">
          <DestinationMap />
          <a href="#explore" className="absolute bottom-0 right-0 flex h-[22px] w-[89px] items-center justify-center bg-[#222]/80 text-white">
            Explore destinations
          </a>
        </aside>
      </div>

      <footer className="mt-[10px] flex h-[25px] items-center gap-[19px] border-t border-[#e2e2e2] bg-[#f1f1f1] pl-[83px] text-[#777]">
        <a href="#privacy">Privacy &amp; Terms</a>
        <a href="#about">About Flights</a>
      </footer>
    </div>
  );
}
